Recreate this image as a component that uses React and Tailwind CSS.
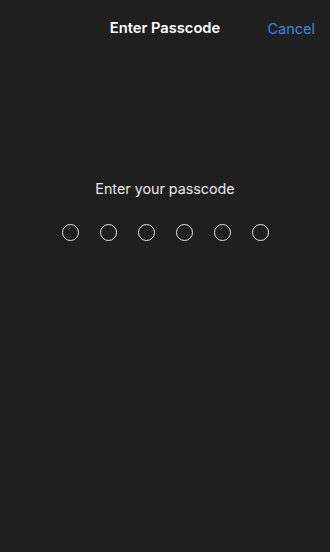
export default function App() {
  const dots = [0, 1, 2, 3, 4, 5];
  return (
    <div className="w-[330px] h-[552px] bg-[#1f1f1f] flex flex-col" style={{ fontFamily: '"Inter", "Liberation Sans", sans-serif' }}>
      <div className="relative h-[57px] flex items-center justify-center">
        <span className="text-white text-[14.7px] font-semibold">Enter Passcode</span>
        <button className="absolute right-[15px] top-[18px] text-[14.5px] text-[#3d86e0]">Cancel</button>
      </div>
      <div className="flex flex-col items-center pt-[121px]">
        <p className="text-[#e8e8e8] text-[14.3px]">Enter your passcode</p>
        <div className="flex gap-[21px] mt-[25px] pl-[1px]">
          {dots.map((d) => (
            <div key={d} className="w-[17px] h-[17px] rounded-full border-[1.7px] border-[#e6e6e6]" />
          ))}
        </div>
      </div>
    </div>
  );
}
